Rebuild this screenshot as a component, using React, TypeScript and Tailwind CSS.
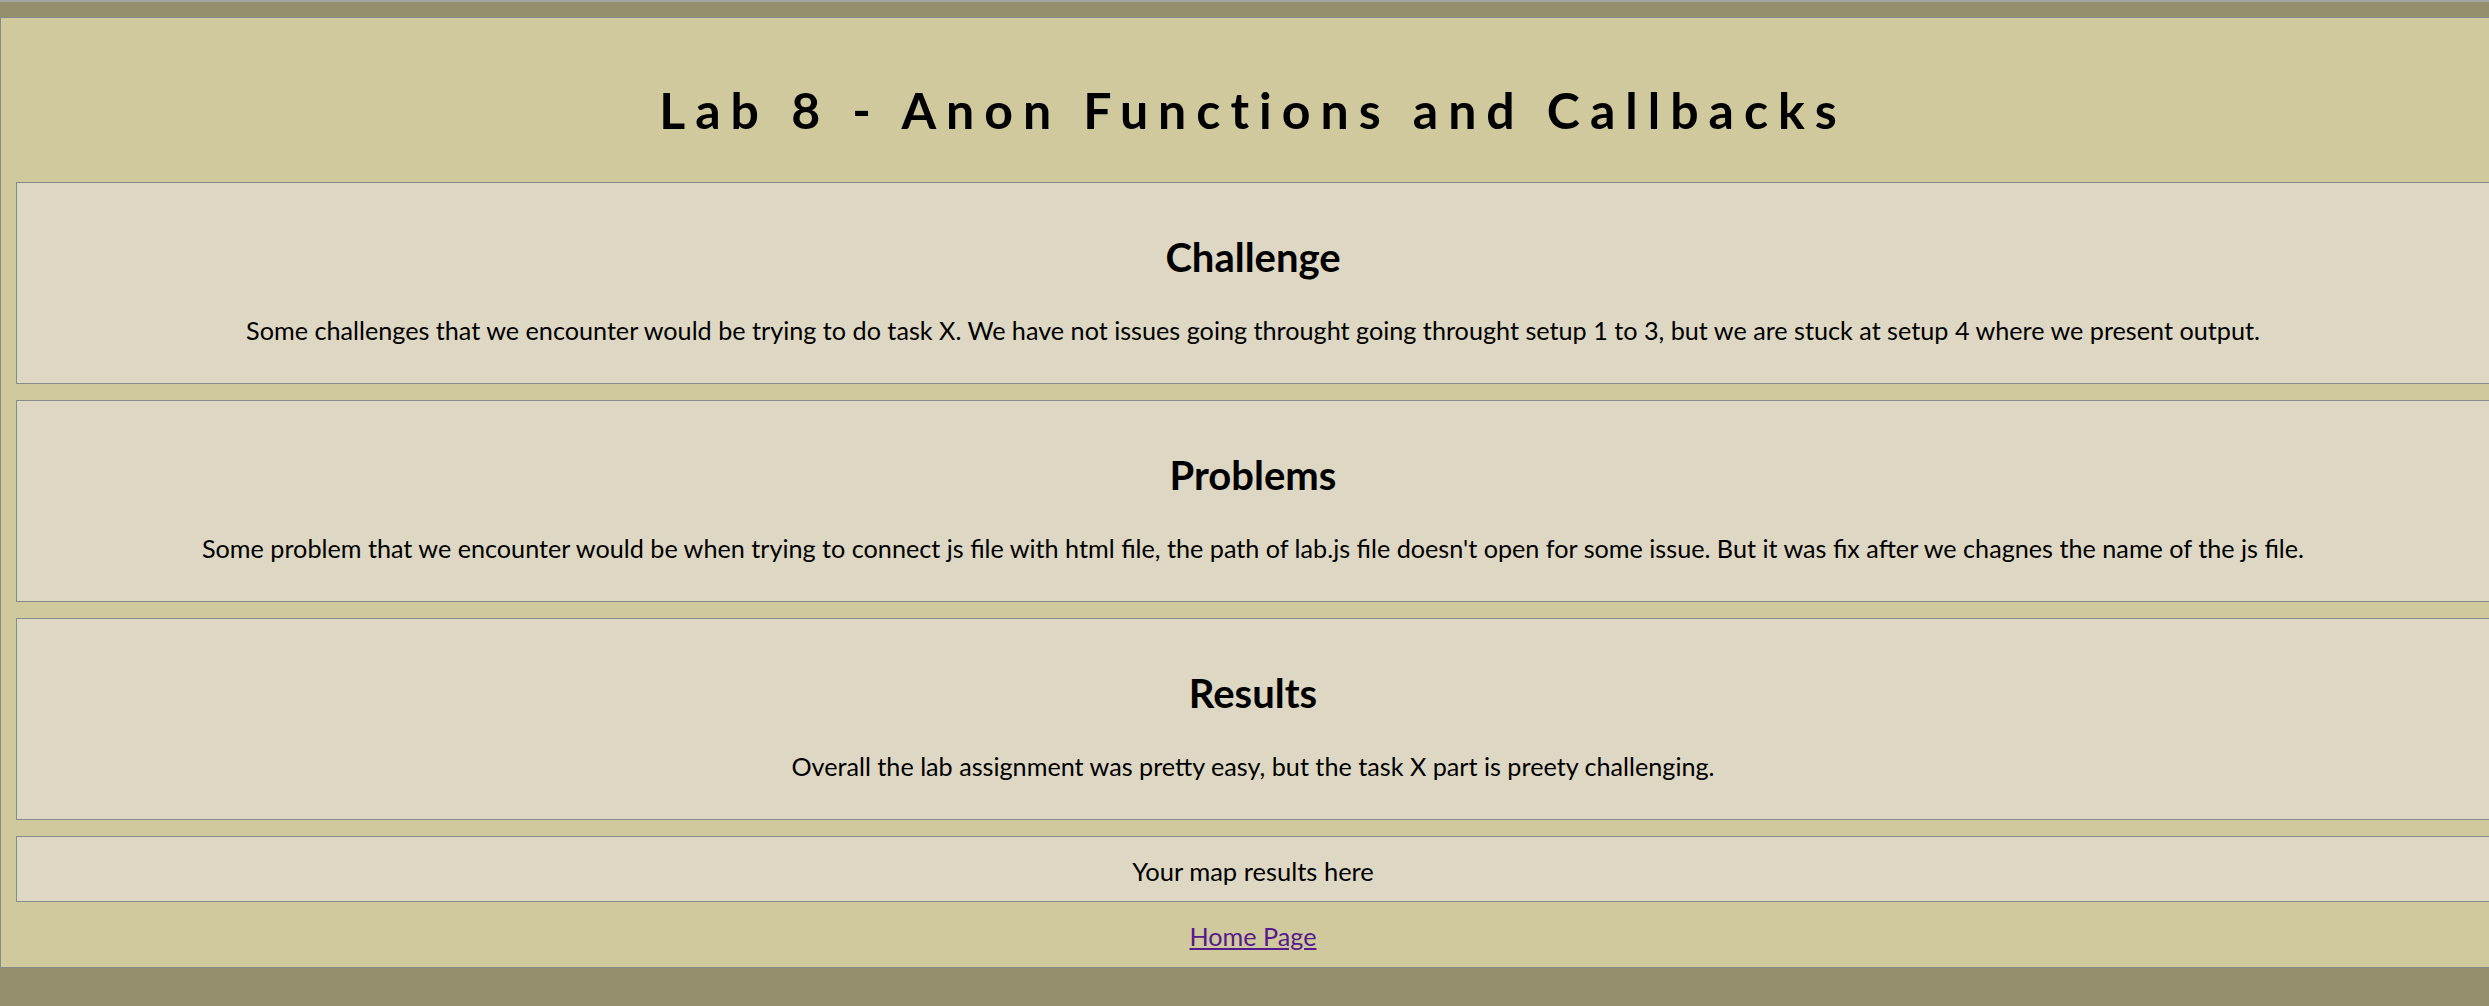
const sections = [
  {
    title: "Challenge",
    body: "Some challenges that we encounter would be trying to do task X. We have not issues going throught going throught setup 1 to 3, but we are stuck at setup 4 where we present output.",
  },
  {
    title: "Problems",
    body: "Some problem that we encounter would be when trying to connect js file with html file, the path of lab.js file doesn't open for some issue. But it was fix after we chagnes the name of the js file.",
  },
  {
    title: "Results",
    body: "Overall the lab assignment was pretty easy, but the task X part is preety challenging.",
  },
];

export default function App() {
  return (
    <div className="min-h-screen overflow-hidden border-t-2 border-[#a4a4a4] bg-[#968f6e] pt-[15px] font-['Lato',sans-serif] text-black">
      <main className="w-[2506px] border border-[#8a8a8a] bg-[#d0c99e] px-[15px] pb-[15px]">
        <h1 className="pt-[62px] pb-[42px] text-center text-[50px] font-bold leading-[60px] tracking-[0.2em]">
          Lab 8 - Anon Functions and Callbacks
        </h1>

        <div className="flex flex-col gap-4">
          {sections.map((s) => (
            <section
              key={s.title}
              className="h-[202px] border border-[#8a8a8a] bg-[#ddd7c3] pt-[51px] text-center"
            >
              <h2 className="text-[40px] font-bold leading-[46px]">{s.title}</h2>
              <p className="mt-[34px] text-[25.2px] leading-[32px]">{s.body}</p>
            </section>
          ))}

          <div className="h-[66px] border border-[#8a8a8a] bg-[#ddd7c3] pt-[18px] text-center text-[25.5px] leading-[32px]">
            Your map results here
          </div>
        </div>

        <div className="mt-[18px] text-center text-[25.2px] leading-[32px]">
          <a href="#" className="text-[#551a8b] underline">
            Home Page
          </a>
        </div>
      </main>
    </div>
  );
}
